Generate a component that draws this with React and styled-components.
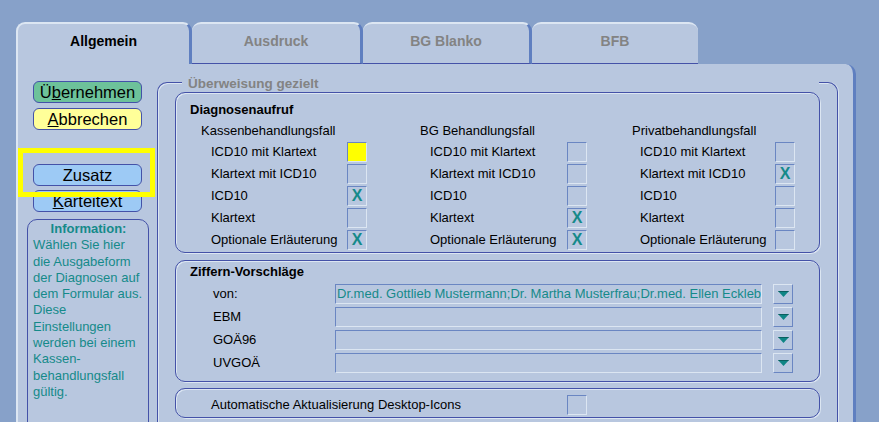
import React from 'react';
import styled, { createGlobalStyle } from 'styled-components';

const C = {
  bg: '#87a1c9',
  panel: '#b8c7df',
  light: '#dce6f2',
  dark: '#4452a8',
  edge: '#5f7fc0',
  sunk: '#6a86c2',
  teal: '#158a8a',
  grey: '#838383',
};

const Global = createGlobalStyle`
  html, body { margin: 0; padding: 0; background: ${C.bg}; }
  body { font-family: "Liberation Sans", Arial, sans-serif; font-size: 13px; color: #000; }
  * { box-sizing: border-box; }
`;

const Screen = styled.div`
  width: 879px;
  height: 422px;
  overflow: hidden;
  background: ${C.bg};
  padding: 22px 0 0 16px;
  display: flex;
  flex-direction: column;
`;

const TabRow = styled.div`
  display: flex;
  height: 42px;
  flex-shrink: 0;
`;

const Tab = styled.div`
  width: ${(p) => p.$w}px;
  height: 42px;
  display: flex;
  align-items: center;
  justify-content: center;
  padding-bottom: 6px;
  background: ${C.panel};
  border-top: 2px solid ${C.light};
  border-left: ${(p) => (p.$active ? `2px solid ${C.light}` : 'none')};
  border-right: ${(p) => (p.$last ? 'none' : `3px solid ${C.edge}`)};
  border-bottom: ${(p) => (p.$active ? 'none' : `1px solid ${C.dark}`)};
  border-radius: 9px 9px 0 0;
  font-size: 14px;
  font-weight: bold;
  color: ${(p) => (p.$active ? '#000' : C.grey)};
`;

const Panel = styled.div`
  width: 840px;
  flex: 1;
  display: flex;
  background: ${C.panel};
  border-left: 2px solid ${C.light};
  border-right: 3px solid ${C.edge};
  border-top-right-radius: 10px;
`;

const LeftCol = styled.div`
  position: relative;
  width: 139px;
  flex-shrink: 0;
  display: flex;
  flex-direction: column;
  align-items: flex-start;
  padding: 17px 0 0 15px;
`;

const Btn = styled.div`
  width: 109px;
  height: 22px;
  flex-shrink: 0;
  margin-top: ${(p) => p.$mt || 0}px;
  border: 1px solid ${C.dark};
  border-radius: 6px;
  background: ${(p) => p.$color};
  display: flex;
  align-items: center;
  justify-content: center;
  font-size: 16.5px;
  color: #000;
`;

const U = styled.span`
  text-decoration: underline;
`;

const Highlight = styled.div`
  position: absolute;
  left: 0;
  top: 84px;
  width: 137px;
  height: 49px;
  border: 5px solid #ffff00;
  pointer-events: none;
`;

const InfoBox = styled.div`
  margin: 7px 0 -14px -6px;
  width: 122px;
  flex: 1;
  border: 1px solid ${C.dark};
  border-radius: 10px 10px 0 0;
  padding: 1px 4px 0 5px;
  color: ${C.teal};
  font-size: 13px;
  line-height: 16.3px;
`;

const InfoTitle = styled.div`
  font-weight: bold;
  text-align: center;
`;

const Main = styled.div`
  flex: 1;
  display: flex;
  flex-direction: column;
  padding: 18px 15px 0 0;
`;

const OuterGroup = styled.div`
  flex: 1;
  border: 1px solid ${C.dark};
  border-bottom: none;
  border-radius: 10px 10px 0 0;
  box-shadow: inset 1px 1px 0 ${C.light}, 1px 0 0 ${C.light};
  padding: 0 17px;
  display: flex;
  flex-direction: column;
`;

const OuterTitle = styled.div`
  margin: -8px 1px 0 7px;
  padding-left: 6px;
  height: 17px;
  line-height: 17px;
  background: ${C.panel};
  color: ${C.grey};
  font-weight: bold;
  font-size: 13.5px;
`;

const Group = styled.div`
  flex-shrink: 0;
  margin-top: ${(p) => p.$mt || 0}px;
  height: ${(p) => p.$h}px;
  border: 1px solid ${C.dark};
  border-radius: 10px;
  box-shadow: inset 1px 1px 0 ${C.light}, 1px 1px 0 ${C.light};
  padding: ${(p) => p.$pad};
`;

const GroupTitle = styled.div`
  font-weight: bold;
  font-size: 13px;
  line-height: 16px;
  margin-bottom: ${(p) => p.$mb}px;
`;

const Columns = styled.div`
  display: flex;
  margin-left: 11px;
`;

const Column = styled.div`
  width: ${(p) => (p.$w ? `${p.$w}px` : 'auto')};
  flex: ${(p) => (p.$w ? 'none' : '1')};
`;

const ColHead = styled.div`
  line-height: 16px;
  margin-bottom: 3px;
`;

const CheckRow = styled.div`
  display: flex;
  align-items: flex-start;
  height: 22px;
  padding-left: ${(p) => p.$indent}px;
`;

const Label = styled.div`
  width: ${(p) => p.$w}px;
  flex-shrink: 0;
  line-height: 20px;
  white-space: nowrap;
`;

const Check = styled.div`
  width: 20px;
  height: 20px;
  flex-shrink: 0;
  border-top: 1px solid ${C.sunk};
  border-left: 1px solid ${C.sunk};
  border-bottom: 1px solid ${C.light};
  border-right: 1px solid ${C.light};
  background: ${(p) => (p.$yellow ? '#ffff00' : 'transparent')};
  display: flex;
  align-items: center;
  justify-content: center;
  color: ${C.teal};
  font-weight: bold;
  font-size: 16px;
  line-height: 1;
`;

const FieldRow = styled.div`
  display: flex;
  align-items: center;
  height: 20px;
  margin-top: ${(p) => (p.$first ? 0 : 3)}px;
`;

const FieldLabel = styled.div`
  width: 122px;
  margin-left: 23px;
  flex-shrink: 0;
  line-height: 20px;
`;

const Field = styled.div`
  width: 427px;
  height: 20px;
  flex-shrink: 0;
  border-top: 1px solid ${C.sunk};
  border-left: 1px solid ${C.sunk};
  border-bottom: 1px solid ${C.light};
  border-right: 1px solid ${C.light};
  color: ${C.teal};
  font-size: 13px;
  line-height: 18px;
  padding-left: 1px;
  white-space: nowrap;
  overflow: hidden;
`;

const DropBtn = styled.div`
  width: 20px;
  height: 20px;
  margin-left: 11px;
  flex-shrink: 0;
  border-top: 1px solid ${C.light};
  border-left: 1px solid ${C.light};
  border-bottom: 1px solid ${C.sunk};
  border-right: 1px solid ${C.sunk};
  display: flex;
  align-items: center;
  justify-content: center;
`;

const AutoRow = styled.div`
  display: flex;
  align-items: center;
`;

const Arrow = () => (
  <svg width="11" height="6" viewBox="0 0 11 6">
    <polygon points="0,0 11,0 5.5,6" fill="#0f8585" />
    <polygon points="0,0 11,0 10,1 1,1" fill="#0a5f5f" />
  </svg>
);

const options = ['ICD10 mit Klartext', 'Klartext mit ICD10', 'ICD10', 'Klartext', 'Optionale Erläuterung'];

const columns = [
  { head: 'Kassenbehandlungsfall', w: 219, indent: 10, lw: 136, marks: ['yellow', '', 'X', '', 'X'] },
  { head: 'BG Behandlungsfall', w: 212, indent: 10, lw: 137, marks: ['', '', '', 'X', 'X'] },
  { head: 'Privatbehandlungsfall', w: null, indent: 8, lw: 135, marks: ['', 'X', '', '', ''] },
];

const fields = [
  { label: 'von:', value: 'Dr.med. Gottlieb Mustermann;Dr. Martha Musterfrau;Dr.med. Ellen Eckleb' },
  { label: 'EBM', value: '' },
  { label: 'GOÄ96', value: '' },
  { label: 'UVGOÄ', value: '' },
];

const tabs = [
  { name: 'Allgemein', w: 176, active: true },
  { name: 'Ausdruck', w: 171 },
  { name: 'BG Blanko', w: 169 },
  { name: 'BFB', w: 166, last: true },
];

export default function App() {
  return (
    <>
      <Global />
      <Screen>
        <TabRow>
          {tabs.map((t) => (
            <Tab key={t.name} $w={t.w} $active={t.active} $last={t.last}>
              {t.name}
            </Tab>
          ))}
        </TabRow>
        <Panel>
          <LeftCol>
            <Btn $color="#6dc29a">
              Ü<U>b</U>ernehmen
            </Btn>
            <Btn $color="#ffff99" $mt={5}>
              <U>A</U>bbrechen
            </Btn>
            <Btn $color="#9dcaf5" $mt={34}>
              Zusatz
            </Btn>
            <Btn $color="#9dcaf5" $mt={4}>
              <U>K</U>arteitext
            </Btn>
            <InfoBox>
              <InfoTitle>Information:</InfoTitle>
              Wählen Sie hier
              <br />
              die Ausgabeform
              <br />
              der Diagnosen auf
              <br />
              dem Formular aus.
              <br />
              Diese
              <br />
              Einstellungen
              <br />
              werden bei einem
              <br />
              Kassen-
              <br />
              behandlungsfall
              <br />
              gültig.
            </InfoBox>
            <Highlight />
          </LeftCol>
          <Main>
            <OuterGroup>
              <OuterTitle>Überweisung gezielt</OuterTitle>
              <Group $h={161} $pad="9px 14px 0 14px">
                <GroupTitle $mb={5}>Diagnosenaufruf</GroupTitle>
                <Columns>
                  {columns.map((col) => (
                    <Column key={col.head} $w={col.w}>
                      <ColHead>{col.head}</ColHead>
                      {options.map((opt, i) => (
                        <CheckRow key={opt} $indent={col.indent}>
                          <Label $w={col.lw}>{opt}</Label>
                          <Check $yellow={col.marks[i] === 'yellow'}>
                            {col.marks[i] === 'X' ? 'X' : ''}
                          </Check>
                        </CheckRow>
                      ))}
                    </Column>
                  ))}
                </Columns>
              </Group>
              <Group $mt={7} $h={122} $pad="3px 26px 0 14px">
                <GroupTitle $mb={4}>Ziffern-Vorschläge</GroupTitle>
                {fields.map((f, i) => (
                  <FieldRow key={f.label} $first={i === 0}>
                    <FieldLabel>{f.label}</FieldLabel>
                    <Field>{f.value}</Field>
                    <DropBtn>
                      <Arrow />
                    </DropBtn>
                  </FieldRow>
                ))}
              </Group>
              <Group $mt={6} $h={30} $pad="6px 0 2px 35px">
                <AutoRow>
                  <Label $w={356}>Automatische Aktualisierung Desktop-Icons</Label>
                  <Check />
                </AutoRow>
              </Group>
            </OuterGroup>
          </Main>
        </Panel>
      </Screen>
    </>
  );
}
